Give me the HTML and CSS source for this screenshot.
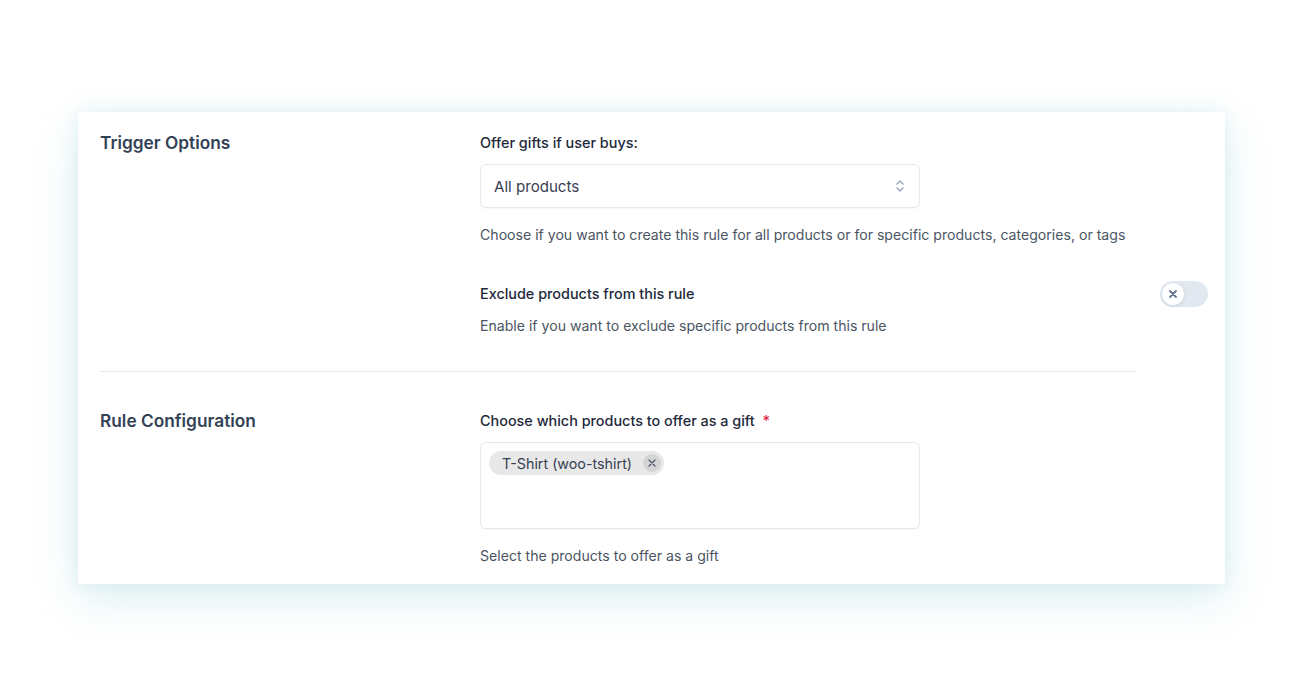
FILE: index.html
```html
<!DOCTYPE html>
<html>
<head>
<meta charset="utf-8">
<link rel="stylesheet" href="styles.css">
</head>
<body>
<div class="page">
  <div class="card">
    <section class="section">
      <div class="side"><h2 class="heading">Trigger Options</h2></div>
      <div class="main">
        <div class="field">
          <div class="label">Offer gifts if user buys:</div>
          <div class="select">
            <span>All products</span>
            <svg class="chev" width="10" height="16" viewBox="0 0 10 16"><path d="M2 6 L5 3 L8 6 M2 10 L5 13 L8 10" fill="none" stroke="#94a3b8" stroke-width="1.4" stroke-linecap="round" stroke-linejoin="round"/></svg>
          </div>
          <div class="desc">Choose if you want to create this rule for all products or for specific products, categories, or tags</div>
        </div>
        <div class="field field-toggle">
          <div class="label-row">
            <div class="label">Exclude products from this rule</div>
            <div class="toggle"><span class="knob"><svg width="10" height="10" viewBox="0 0 10 10"><path d="M2 2 L8 8 M8 2 L2 8" stroke="#64748b" stroke-width="1.8" stroke-linecap="round"/></svg></span></div>
          </div>
          <div class="desc">Enable if you want to exclude specific products from this rule</div>
        </div>
      </div>
    </section>
    <div class="divider"></div>
    <section class="section section2">
      <div class="side"><h2 class="heading">Rule Configuration</h2></div>
      <div class="main">
        <div class="field">
          <div class="label">Choose which products to offer as a gift <span class="req">*</span></div>
          <div class="multi">
            <span class="tag">T-Shirt (woo-tshirt)<span class="tag-x"><svg width="8" height="8" viewBox="0 0 8 8"><path d="M1 1 L7 7 M7 1 L1 7" stroke="#4b5563" stroke-width="1.2" stroke-linecap="round"/></svg></span></span>
          </div>
          <div class="desc">Select the products to offer as a gift</div>
        </div>
      </div>
    </section>
  </div>
</div>
</body>
</html>
```
FILE: styles.css
```css
* { box-sizing: border-box; }
html, body { margin: 0; padding: 0; background: #fff; }
body { font-family: Inter, "Noto Sans", "Liberation Sans", sans-serif; color: #334155; }
.page { padding: 112px 75px 0 78px; min-height: 693px; }
.card {
  width: 1147px;
  height: 472px;
  background: #fff;
  border-radius: 3px;
  box-shadow: 0 16px 44px rgba(150, 205, 215, 0.3), 0 0 16px rgba(180, 220, 228, 0.32);
  padding: 0 17px 0 22px;
}
.section { display: flex; padding-top: 20px; }
.side { width: 380px; flex-shrink: 0; }
.heading { margin: 0; font-size: 17.3px; line-height: 22px; font-weight: 600; color: #334155; }
.main { flex: 1; }
.label { font-size: 14.4px; line-height: 22px; font-weight: 500; color: #1e293b; }
.req { color: #e11d48; margin-left: 4px; }
.select {
  margin-top: 10px;
  width: 440px;
  height: 44px;
  border: 1px solid #e2e8f0;
  border-radius: 6px;
  display: flex;
  align-items: center;
  justify-content: space-between;
  padding: 0 14px 0 13px;
  font-size: 15.1px;
  color: #374151;
  box-shadow: 0 1px 2px rgba(0,0,0,0.04);
}
.chev { display: block; }
.desc { font-size: 14.1px; line-height: 22px; color: #4b5563; margin-top: 16px; }
.field-toggle { margin-top: 35px; }
.label-row { display: flex; align-items: center; justify-content: space-between; }
.field-toggle .desc { margin-top: 8px; }
.toggle {
  width: 48px; height: 26px; border-radius: 13px; background: #e2e8f0;
  display: flex; align-items: center; padding: 1px;
}
.knob {
  width: 24px; height: 24px; border-radius: 50%; background: #fff;
  border: 1px solid #dbe2ea; box-shadow: 0 1px 2px rgba(0,0,0,0.08);
  display: flex; align-items: center; justify-content: center;
}
.knob svg { display: block; }
.divider { height: 1px; background: #e5e7eb; width: 1037px; margin-top: 34px; }
.section2 { padding-top: 38px; }
.multi {
  margin-top: 10px;
  width: 440px; height: 87px;
  border: 1px solid #e2e8f0; border-radius: 6px;
  padding: 8px;
  box-shadow: 0 1px 2px rgba(0,0,0,0.04);
}
.tag {
  display: inline-flex; align-items: center; height: 24px;
  background: #e8e8e8; border-radius: 12px;
  padding: 0 3px 0 13px; font-size: 14.3px; color: #374151;
}
.tag-x {
  width: 18px; height: 18px; border-radius: 50%; background: #d4d4d4;
  margin-left: 11px; display: flex; align-items: center; justify-content: center;
}
.tag-x svg { display: block; }
.section2 .desc { margin-top: 16px; }
```
